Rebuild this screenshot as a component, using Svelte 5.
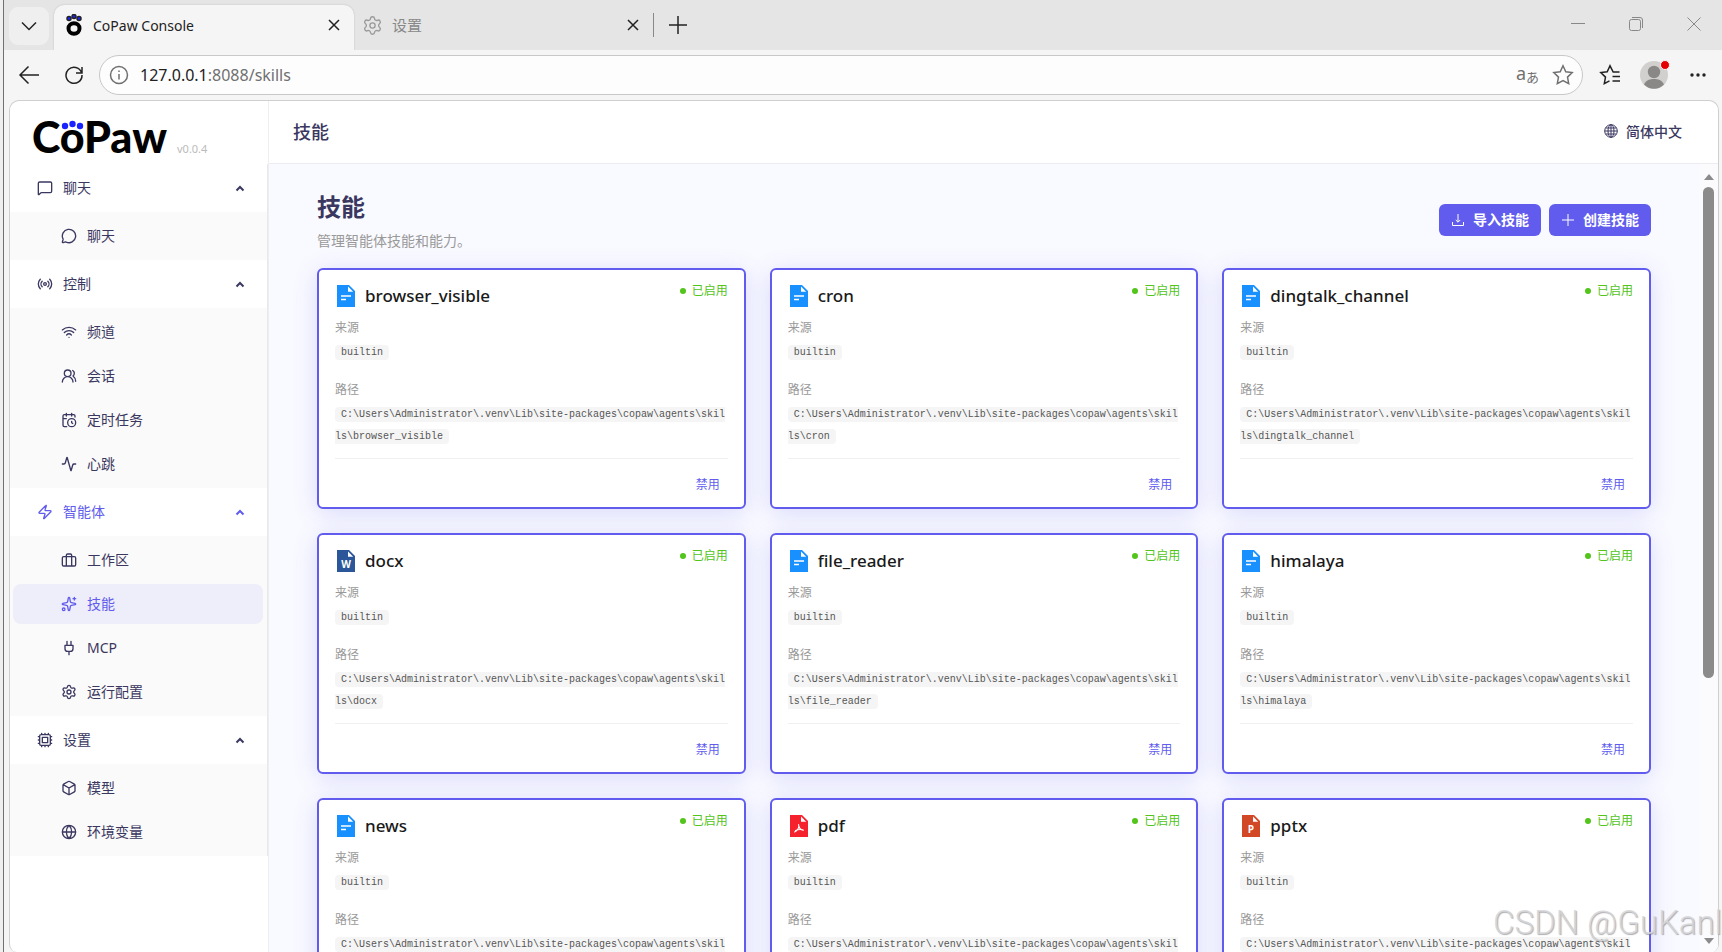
<script lang="ts">
  const icons = {
    messageSquare: 'M22 17a2 2 0 0 1-2 2H6.8a2 2 0 0 0-1.4.6l-2.2 2.2A.7.7 0 0 1 2 21.3V5a2 2 0 0 1 2-2h16a2 2 0 0 1 2 2z',
    messageCircle: 'M2.992 16.342a2 2 0 0 1 .094 1.167l-1.065 3.29a1 1 0 0 0 1.236 1.168l3.413-.998a2 2 0 0 1 1.099.092 10 10 0 1 0-4.777-4.719',
    radio: 'M16.247 7.761a6 6 0 0 1 0 8.478M19.075 4.933a10 10 0 0 1 0 14.134M4.925 19.067a10 10 0 0 1 0-14.134M7.753 16.239a6 6 0 0 1 0-8.478M10 12a2 2 0 1 0 4 0a2 2 0 1 0-4 0',
    wifi: 'M12 20h.01M2 8.82a15 15 0 0 1 20 0M5 12.859a10 10 0 0 1 14 0M8.5 16.429a5 5 0 0 1 7 0',
    users: 'M18 21a8 8 0 0 0-16 0M5 8a5 5 0 1 0 10 0a5 5 0 1 0-10 0M22 20c0-3.37-2-6.5-4-8a5 5 0 0 0-.45-8.3',
    calendar: 'M16 14v2.2l1.6 1M16 2v4M21 7.5V6a2 2 0 0 0-2-2H5a2 2 0 0 0-2 2v14a2 2 0 0 0 2 2h3.5M3 10h5M8 2v4M10 16a6 6 0 1 0 12 0a6 6 0 1 0-12 0',
    activity: 'M22 12h-2.48a2 2 0 0 0-1.93 1.46l-2.35 8.36a.25.25 0 0 1-.48 0L9.24 2.18a.25.25 0 0 0-.48 0l-2.35 8.36A2 2 0 0 1 4.49 12H2',
    zap: 'M4 14a1 1 0 0 1-.78-1.63l9.9-10.2a.5.5 0 0 1 .86.46l-1.92 6.02A1 1 0 0 0 13 10h7a1 1 0 0 1 .78 1.63l-9.9 10.2a.5.5 0 0 1-.86-.46l1.92-6.02A1 1 0 0 0 11 14z',
    briefcase: 'M16 21V5a2 2 0 0 0-2-2h-4a2 2 0 0 0-2 2v16M4 7h16a2 2 0 0 1 2 2v10a2 2 0 0 1-2 2H4a2 2 0 0 1-2-2V9a2 2 0 0 1 2-2z',
    sparkles: 'M11.017 2.814a1 1 0 0 1 1.966 0l1.051 5.558a2 2 0 0 0 1.594 1.594l5.558 1.051a1 1 0 0 1 0 1.966l-5.558 1.051a2 2 0 0 0-1.594 1.594l-1.051 5.558a1 1 0 0 1-1.966 0l-1.051-5.558a2 2 0 0 0-1.594-1.594l-5.558-1.051a1 1 0 0 1 0-1.966l5.558-1.051a2 2 0 0 0 1.594-1.594zM20 2v4M22 4h-4M2 20a2 2 0 1 0 4 0a2 2 0 1 0-4 0',
    plug: 'M12 22v-5M9 8V2M15 8V2M18 8v5a4 4 0 0 1-4 4h-4a4 4 0 0 1-4-4V8Z',
    settings: 'M9.671 4.136a2.34 2.34 0 0 1 4.659 0 2.34 2.34 0 0 0 3.319 1.915 2.34 2.34 0 0 1 2.33 4.033 2.34 2.34 0 0 0 0 3.831 2.34 2.34 0 0 1-2.33 4.033 2.34 2.34 0 0 0-3.319 1.915 2.34 2.34 0 0 1-4.659 0 2.34 2.34 0 0 0-3.32-1.915 2.34 2.34 0 0 1-2.33-4.033 2.34 2.34 0 0 0 0-3.831A2.34 2.34 0 0 1 6.35 6.051a2.34 2.34 0 0 0 3.319-1.915M9 12a3 3 0 1 0 6 0a3 3 0 1 0-6 0',
    cpu: 'M6 4h12a2 2 0 0 1 2 2v12a2 2 0 0 1-2 2H6a2 2 0 0 1-2-2V6a2 2 0 0 1 2-2zM8 8h8v8H8zM12 20v2M12 2v2M17 20v2M17 2v2M7 20v2M7 2v2M2 12h2M2 17h2M2 7h2M20 12h2M20 17h2M20 7h2',
    box: 'M21 8a2 2 0 0 0-1-1.73l-7-4a2 2 0 0 0-2 0l-7 4A2 2 0 0 0 3 8v8a2 2 0 0 0 1 1.73l7 4a2 2 0 0 0 2 0l7-4A2 2 0 0 0 21 16ZM3.3 7l8.7 5 8.7-5M12 22V12',
    globe: 'M2 12a10 10 0 1 0 20 0a10 10 0 1 0-20 0M12 2a14.5 14.5 0 0 0 0 20 14.5 14.5 0 0 0 0-20M2 12h20',
  }

  const menu = [
    { label: '聊天', icon: 'messageSquare', items: [{ label: '聊天', icon: 'messageCircle' }] },
    {
      label: '控制',
      icon: 'radio',
      items: [
        { label: '频道', icon: 'wifi' },
        { label: '会话', icon: 'users' },
        { label: '定时任务', icon: 'calendar' },
        { label: '心跳', icon: 'activity' },
      ],
    },
    {
      label: '智能体',
      icon: 'zap',
      items: [
        { label: '工作区', icon: 'briefcase' },
        { label: '技能', icon: 'sparkles' },
        { label: 'MCP', icon: 'plug' },
        { label: '运行配置', icon: 'settings' },
      ],
    },
    {
      label: '设置',
      icon: 'cpu',
      items: [
        { label: '模型', icon: 'box' },
        { label: '环境变量', icon: 'globe' },
      ],
    },
  ]

  const root = 'C:\\Users\\Administrator\\.venv\\Lib\\site-packages\\copaw\\agents\\skills\\'

  const skills = [
    { name: 'browser_visible', type: 'text' },
    { name: 'cron', type: 'text' },
    { name: 'dingtalk_channel', type: 'text' },
    { name: 'docx', type: 'word' },
    { name: 'file_reader', type: 'text' },
    { name: 'himalaya', type: 'text' },
    { name: 'news', type: 'text' },
    { name: 'pdf', type: 'pdf' },
    { name: 'pptx', type: 'ppt' },
  ]

  const fileColors = { text: '#1890ff', word: '#2b579a', pdf: '#f5222d', ppt: '#d24726' }

  let activeGroup = $state('智能体')
  let activeItem = $state('技能')

  function select(group: string, item: string) {
    activeGroup = group
    activeItem = item
  }
</script>

{#snippet icon(name)}
  <svg class="icon" viewBox="0 0 24 24" aria-hidden="true"><path d={icons[name]} /></svg>
{/snippet}

{#snippet cross()}
  <svg width="12" height="12" viewBox="0 0 12 12" aria-hidden="true"><path d="M1 1l10 10M11 1L1 11" /></svg>
{/snippet}

{#snippet fileIcon(type)}
  <svg class="file-icon" width="22" height="24" viewBox="0 0 22 24" aria-hidden="true">
    <path d="M2 1h12l6 6v16H2z" fill={fileColors[type]} />
    <path d="M13 2.500v5.200h5.200z" fill="#fff" />
    {#if type === 'text'}
      <path d="M6 12h10M6 15.500h5" stroke="#fff" stroke-width="1.600" />
    {:else if type === 'pdf'}
      <path d="M10.600 10.500c1 3-1.400 6.500-4 7.500M10.800 12c.6 2.500 2 4 4.600 4.200M7.500 16.500c2-1 4.500-1.300 7.500-.8" fill="none" stroke="#fff" stroke-width="1.100" stroke-linecap="round" />
    {:else}
      <text x="11" y="19" text-anchor="middle">{type === 'word' ? 'W' : 'P'}</text>
    {/if}
  </svg>
{/snippet}

<div class="window">
  <div class="tabs">
    <button class="tab-list" aria-label="Tab list">
      <svg width="16" height="10" viewBox="0 0 16 10"><path d="M1 1.500l7 7 7-7" /></svg>
    </button>
    <div class="tab active">
      <svg class="favicon" width="16" height="22" viewBox="0 0 16 22">
        <ellipse cx="8" cy="14.500" rx="5.500" ry="5.200" fill="none" stroke="#000" stroke-width="4" />
        <g fill="#1a22ff"><circle cx="3" cy="4.500" r="2" /><circle cx="8" cy="2.500" r="2" /><circle cx="13" cy="4.500" r="2" /></g>
      </svg>
      <span>CoPaw Console</span>
      <button aria-label="Close tab">{@render cross()}</button>
    </div>
    <div class="tab">
      <svg class="tab-gear" viewBox="0 0 24 24"><path d={icons.settings} /></svg>
      <span>设置</span>
      <button aria-label="Close tab">{@render cross()}</button>
    </div>
    <button class="new-tab" aria-label="New tab">
      <svg width="20" height="20" viewBox="0 0 20 20"><path d="M10 1v18M1 10h18" /></svg>
    </button>
    <div class="controls">
      <button aria-label="Minimize"><svg width="14" height="14" viewBox="0 0 14 14"><path d="M0 6.500h14" /></svg></button>
      <button aria-label="Restore">
        <svg width="14" height="14" viewBox="0 0 14 14"><rect x=".5" y="2.500" width="11" height="11" rx="2" /><path d="M3 .5h8a2.500 2.500 0 0 1 2.500 2.500v8" /></svg>
      </button>
      <button aria-label="Close"><svg width="14" height="14" viewBox="0 0 14 14"><path d="M.5.5l13 13M13.500.5l-13 13" /></svg></button>
    </div>
  </div>

  <div class="toolbar">
    <button aria-label="Back"><svg width="22" height="20" viewBox="0 0 22 20"><path d="M21 10H2M10.500 1.500L2 10l8.500 8.500" /></svg></button>
    <button aria-label="Reload">
      <svg width="20" height="20" viewBox="0 0 20 20"><path d="M17.500 7.500A8 8 0 1 0 18 10M18 2v6h-6" /></svg>
    </button>
    <div class="address">
      <svg class="muted" width="20" height="20" viewBox="0 0 20 20"><circle cx="10" cy="10" r="8.500" /><path d="M10 9v5.500M10 5.500v1.500" /></svg>
      <a class="url" href="/skills"><b>127.0.0.1</b>:8088/skills</a>
      <button class="translate" aria-label="Translate"><span>a</span><small>あ</small></button>
      <button class="muted" aria-label="Add to favorites">
        <svg width="22" height="22" viewBox="0 0 22 22"><path d="M11 1.800l2.800 5.900 6.400.9-4.700 4.500 1.200 6.500L11 16.500l-5.700 3.100 1.200-6.500L1.800 8.600l6.400-.9z" /></svg>
      </button>
    </div>
    <button class="favorites" aria-label="Favorites">
      <svg width="22" height="22" viewBox="0 0 22 22"><path d="M20.500 8h-6.300L11 1.800 8.200 7.700l-6.400.9 4.700 4.500-1.200 6.500 5.200-2.800M13.500 12.500h7.500M13.500 17h7.500" /></svg>
    </button>
    <button class="avatar" aria-label="Profile">
      <svg width="28" height="28" viewBox="0 0 28 28">
        <circle cx="14" cy="14" r="14" fill="#d2d0ce" />
        <circle cx="14" cy="11" r="6.200" fill="#8a8886" />
        <path d="M4 23.500c2-4.500 6-5.500 10-5.500s8 1 10 5.500A14 14 0 0 1 4 23.500z" fill="#8a8886" />
      </svg>
      <i></i>
    </button>
    <button class="more" aria-label="More"><svg width="18" height="6" viewBox="0 0 18 6"><circle cx="3" cy="3" r="1.700" /><circle cx="9" cy="3" r="1.700" /><circle cx="15" cy="3" r="1.700" /></svg></button>
  </div>

  <div class="page">
    <aside>
      <div class="brand">
        <svg width="138" height="44" viewBox="0 0 138 44" role="img" aria-label="CoPaw">
          <text x="-1" y="36">CoPaw</text>
          <g fill="#1a22ff"><circle cx="32" cy="9" r="3.200" /><circle cx="39.500" cy="7" r="3.200" /><circle cx="47" cy="9" r="3.200" /></g>
        </svg>
        <span>v0.0.4</span>
      </div>
      <nav>
        {#each menu as group}
          <button class="group" class:current={group.label === activeGroup}>
            {@render icon(group.icon)}
            <span>{group.label}</span>
            <svg class="arrow" width="10" height="7" viewBox="0 0 10 7"><path d="M1.500 5.500L5 2l3.500 3.500" /></svg>
          </button>
          <ul>
            {#each group.items as item}
              <li>
                <button
                  class="item"
                  class:selected={group.label === activeGroup && item.label === activeItem}
                  onclick={() => select(group.label, item.label)}
                >
                  {@render icon(item.icon)}
                  <span>{item.label}</span>
                </button>
              </li>
            {/each}
          </ul>
        {/each}
      </nav>
    </aside>

    <div class="main">
      <header>
        <span class="crumb">技能</span>
        <button class="lang">
          <svg width="14" height="14" viewBox="0 0 14 14"><circle cx="7" cy="7" r="6.300" /><ellipse cx="7" cy="7" rx="3" ry="6.300" /><path d="M7 .7v12.600M.7 7h12.600M1.600 4h10.800M1.600 10h10.800" /></svg>
          简体中文
        </button>
      </header>

      <div class="body">
        <main>
          <div class="head">
            <div>
              <h1>技能</h1>
              <p>管理智能体技能和能力。</p>
            </div>
            <div class="actions">
              <button>
                <svg width="14" height="14" viewBox="0 0 14 14"><path d="M7 1v8M4.800 7L7 9.200 9.200 7M1.500 9v3.500h11V9" /></svg>
                <span>导入技能</span>
              </button>
              <button>
                <svg width="14" height="14" viewBox="0 0 14 14"><path d="M7 1v12M1 7h12" /></svg>
                <span>创建技能</span>
              </button>
            </div>
          </div>

          <div class="grid">
            {#each skills as skill}
              <article>
                <div class="title">
                  {@render fileIcon(skill.type)}
                  <h2>{skill.name}</h2>
                  <span class="status">已启用</span>
                </div>
                <div class="label">来源</div>
                <div class="value"><code>builtin</code></div>
                <div class="label second">路径</div>
                <div class="value"><code>{root}{skill.name}</code></div>
                <div class="foot"><button>禁用</button></div>
              </article>
            {/each}
          </div>
        </main>
        <div class="scrollbar">
          <svg width="10" height="6" viewBox="0 0 10 6"><path d="M0 6l5-6 5 6z" /></svg>
          <div class="track"><div class="thumb"></div></div>
          <svg width="10" height="6" viewBox="0 0 10 6"><path d="M0 0l5 6 5-6z" /></svg>
        </div>
      </div>
    </div>
  </div>
  <div class="watermark">CSDN @GuKanl</div>
</div>

<style>
  :global(body) {
    margin: 0;
    background: #efefef;
  }

  .window {
    position: relative;
    box-sizing: border-box;
    height: 100vh;
    margin-left: 3px;
    border-left: 1px solid #707070;
    background: #f5f5f5;
    display: flex;
    flex-direction: column;
    overflow: hidden;
    font-family: "Noto Sans", "Noto Sans CJK SC", sans-serif;
    font-size: 14px;
    color: #3a3760;
  }

  button {
    padding: 0;
    border: 0;
    background: none;
    font: inherit;
    color: inherit;
    display: flex;
    align-items: center;
    justify-content: center;
    cursor: pointer;
  }

  svg {
    display: block;
    flex: none;
  }

  /* browser chrome */
  .tabs {
    display: flex;
    height: 50px;
    background: #e5e5e5;
    flex: none;
  }

  .tabs svg,
  .toolbar svg {
    fill: none;
    stroke: #222;
    stroke-width: 1.5;
  }

  .tab-list {
    width: 40px;
    height: 38px;
    margin: 7px 5px 0;
    border-radius: 9px;
    background: #efefef;
  }

  .tab {
    display: flex;
    align-items: center;
    box-sizing: border-box;
    width: 299px;
    height: 45px;
    margin-top: 5px;
    padding: 0 14px 5px 8px;
    color: #888;
  }

  .tab.active {
    width: 300px;
    padding-left: 12px;
    border-radius: 10px 10px 0 0;
    background: #f5f5f5;
    box-shadow: 0 0 2px #bbb;
    clip-path: inset(-3px -3px 0 -3px);
    color: #222;
  }

  .tab span {
    flex: 1;
    margin-left: 11px;
  }

  .tab:not(.active) span {
    margin-left: 9px;
    padding-bottom: 2px;
    font-size: 15px;
  }

  .tab .tab-gear {
    width: 21px;
    height: 21px;
    stroke: #999;
  }

  .new-tab {
    height: 24px;
    margin-top: 13px;
    padding-left: 14px;
    border-left: 1px solid #888;
  }

  .controls {
    display: flex;
    gap: 44px;
    margin-left: auto;
    padding: 0 21px 2px 0;
  }

  .controls svg {
    stroke: #888;
    stroke-width: 1;
  }

  .toolbar {
    display: flex;
    align-items: center;
    height: 50px;
    padding: 0 15px 0 14px;
    flex: none;
  }

  .toolbar > button:nth-child(2) {
    margin-left: 24px;
  }

  .address {
    flex: 1;
    display: flex;
    align-items: center;
    box-sizing: border-box;
    height: 40px;
    margin-left: 15px;
    padding: 0 8px 0 9px;
    border: 1px solid #c8c8c8;
    border-radius: 20px;
    background: #fdfdfd;
  }

  .url {
    flex: 1;
    margin-left: 11px;
    font-size: 16px;
    color: #707070;
    text-decoration: none;
  }

  .url b {
    font-weight: 400;
    color: #222;
  }

  .toolbar .muted,
  .toolbar .muted svg {
    stroke: #707070;
  }

  .toolbar button.muted {
    stroke: none;
  }

  .translate {
    margin-right: 13px;
    font-size: 18px;
    line-height: 20px;
    color: #707070;
  }

  .translate span {
    padding-bottom: 5px;
  }

  .translate small {
    font-size: 13px;
    padding-top: 4px;
  }

  .favorites {
    margin-left: 16px;
  }

  .avatar {
    position: relative;
    margin: 0 21px 0 19px;
  }

  .avatar svg {
    stroke: none;
  }

  .avatar i {
    position: absolute;
    top: -1px;
    right: -2px;
    width: 8px;
    height: 8px;
    border: 1px solid #f5f5f5;
    border-radius: 50%;
    background: #e50000;
  }

  .more svg {
    fill: #222;
    stroke: none;
  }

  .page {
    flex: 1;
    min-height: 0;
    display: flex;
    margin: 0 3px 0 5px;
    border: 1px solid #cfcfcf;
    border-bottom: 0;
    border-radius: 10px 10px 8px 8px;
    background: #fff;
    overflow: hidden;
  }

  /* sidebar */
  aside {
    width: 258px;
    flex: none;
    border-right: 1px solid #eee;
  }

  .brand {
    display: flex;
    align-items: flex-end;
    height: 63px;
    box-sizing: border-box;
    padding: 0 0 3px 23px;
  }

  .brand svg {
    overflow: visible;
  }

  .brand text {
    font: 900 43px Lato, sans-serif;
    fill: #000;
  }

  .brand span {
    margin: 0 0 5px 6px;
    font-size: 11px;
    line-height: 14px;
    color: #bbb;
  }

  nav {
    border-right: 1px solid #e8e8ec;
  }

  nav span,
  .actions span {
    padding-bottom: 2px;
  }

  .icon {
    width: 16px;
    height: 16px;
    fill: none;
    stroke: currentColor;
    stroke-width: 2;
    stroke-linecap: round;
    stroke-linejoin: round;
  }

  .group {
    width: 100%;
    height: 48px;
    padding: 0 22px 0 27px;
    gap: 10px;
    justify-content: flex-start;
  }

  .group.current {
    color: #615ced;
  }

  .arrow {
    margin-left: auto;
    fill: none;
    stroke: currentColor;
    stroke-width: 2;
  }

  ul {
    display: flex;
    flex-direction: column;
    gap: 4px;
    margin: 0;
    padding: 4px 4px 4px 3px;
    list-style: none;
    background: #fafafa;
  }

  .item {
    width: 100%;
    height: 40px;
    padding-left: 48px;
    gap: 10px;
    justify-content: flex-start;
    border-radius: 8px;
  }

  .item.selected {
    background: #eeedfa;
    color: #615ced;
  }

  /* content */
  .main {
    flex: 1;
    min-width: 0;
    display: flex;
    flex-direction: column;
  }

  header {
    display: flex;
    align-items: center;
    justify-content: space-between;
    box-sizing: border-box;
    height: 63px;
    padding: 0 36px 2px 24px;
    border-bottom: 1px solid #ececf2;
    flex: none;
  }

  .crumb {
    font-size: 18px;
    font-weight: 500;
  }

  .lang {
    gap: 8px;
    font-weight: 500;
  }

  .lang svg {
    fill: none;
    stroke: currentColor;
    stroke-width: 1;
  }

  .body {
    flex: 1;
    min-height: 0;
    display: flex;
    background: #f9faff;
  }

  main {
    flex: 1;
    min-width: 0;
    padding: 26px 48px 0;
    overflow: hidden;
  }

  .head {
    display: flex;
    align-items: center;
    justify-content: space-between;
    margin-bottom: 15px;
  }

  h1 {
    margin: 0 0 5px;
    font-size: 24px;
    line-height: 34px;
    font-weight: 700;
  }

  .head p {
    margin: 0;
    line-height: 24px;
    color: #999;
  }

  .actions {
    display: flex;
    gap: 8px;
    padding-bottom: 3px;
  }

  .actions button {
    height: 32px;
    padding: 0 12px;
    gap: 8px;
    border-radius: 6px;
    background: #615ced;
    color: #fff;
    font-weight: 700;
  }

  .actions svg {
    fill: none;
    stroke: #fff;
    stroke-width: 1;
  }

  .grid {
    display: grid;
    grid-template-columns: repeat(3, 1fr);
    gap: 24px;
  }

  article {
    padding: 14px 16px 10px;
    border: 2px solid #615ced;
    border-radius: 6px;
    background: #fff;
    box-shadow: 0 4px 24px rgba(97, 92, 237, 0.2);
  }

  .title {
    display: flex;
    align-items: center;
    height: 24px;
    margin-bottom: 10px;
  }

  .file-icon text {
    font: 700 10px "Open Sans", sans-serif;
    fill: #fff;
  }

  h2 {
    margin: 0 0 0 8px;
    font-size: 17px;
    line-height: 24px;
    font-weight: 500;
    color: #1a1a1a;
  }

  .status {
    display: flex;
    align-items: center;
    gap: 6px;
    align-self: flex-start;
    margin-left: auto;
    font-size: 12px;
    line-height: 14px;
    color: #52c41a;
  }

  .status::before {
    content: "";
    width: 6px;
    height: 6px;
    border-radius: 50%;
    background: #52c41a;
  }

  .label {
    margin-bottom: 4px;
    font-size: 12px;
    line-height: 20px;
    color: #999;
  }

  .label.second {
    margin-top: 16px;
  }

  .value {
    font-family: "Liberation Mono", monospace;
    font-size: 10px;
    line-height: 22px;
    word-break: break-all;
  }

  code {
    padding: 2px 6px;
    border-radius: 4px;
    background: #f5f5f5;
    font: inherit;
    color: #555;
  }

  .foot {
    display: flex;
    justify-content: flex-end;
    margin-top: 10px;
    padding-top: 12px;
    border-top: 1px solid #f0f0f0;
  }

  .foot button {
    height: 26px;
    padding: 0 8px;
    font-size: 12px;
    color: #615ced;
  }

  .scrollbar {
    width: 19px;
    flex: none;
    display: flex;
    flex-direction: column;
    align-items: center;
    gap: 7px;
    box-sizing: border-box;
    padding: 10px 0 8px;
    background: #fbfbfd;
    fill: #8b8b8b;
  }

  .track {
    flex: 1;
    width: 11px;
  }

  .thumb {
    height: 66%;
    border-radius: 6px;
    background: #8b8b8b;
  }

  .watermark {
    position: absolute;
    right: 0;
    bottom: 10px;
    font: 300 33px/38px Roboto, sans-serif;
    color: rgba(215, 215, 218, 0.85);
    text-shadow: 1px 1px 1px rgba(120, 120, 125, 0.6);
    pointer-events: none;
  }
</style>
